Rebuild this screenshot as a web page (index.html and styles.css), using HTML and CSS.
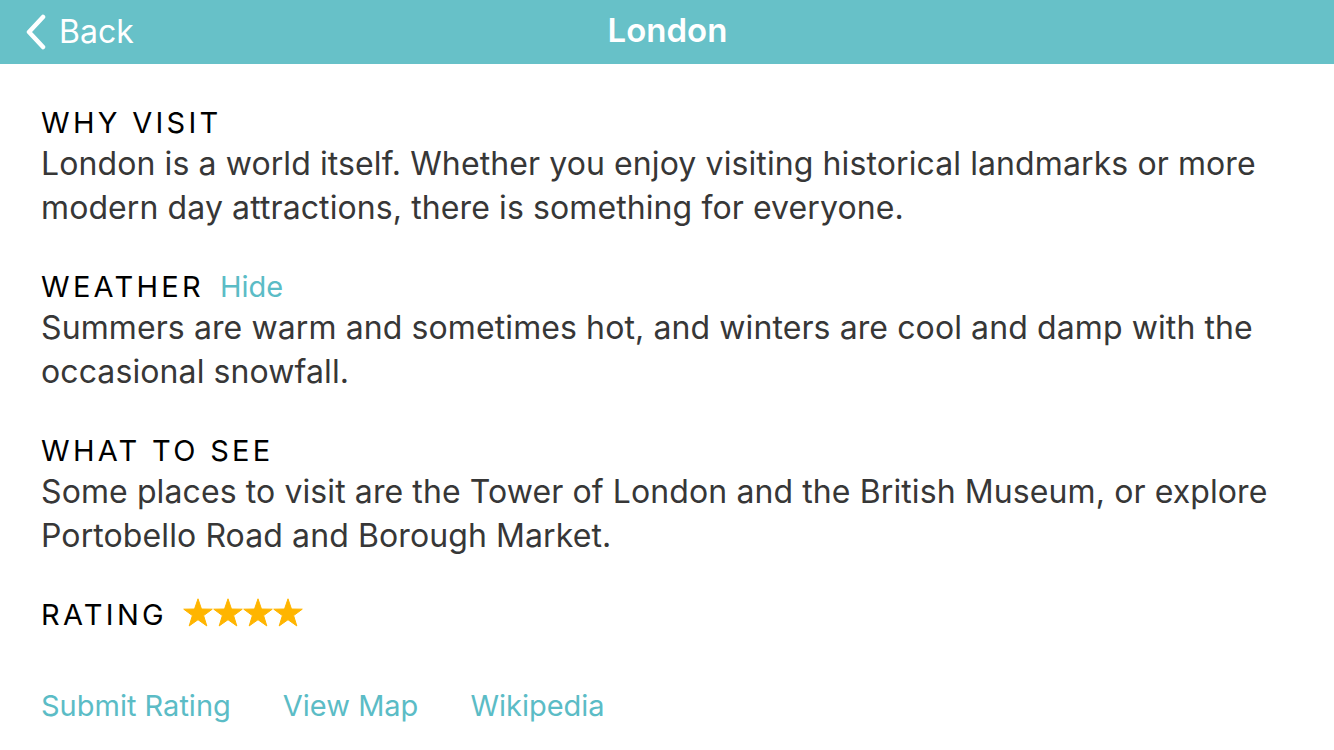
FILE: index.html
```html
<!DOCTYPE html>
<html lang="en">
<head>
<meta charset="utf-8">
<title>London</title>
<link rel="stylesheet" href="styles.css">
</head>
<body>
<header class="navbar">
  <a class="back" href="#">
    <svg class="chevron" width="22" height="36" viewBox="0 0 22 36"><path d="M18 3 L4 18 L18 33" fill="none" stroke="#fff" stroke-width="4.5" stroke-linecap="round" stroke-linejoin="round"/></svg>
    <span>Back</span>
  </a>
  <h1 class="title">London</h1>
  <span class="spacer"></span>
</header>
<main class="content">
  <section class="section">
    <h2 class="heading">WHY VISIT</h2>
    <p class="body">London is a world itself. Whether you enjoy visiting historical landmarks or more modern day attractions, there is something for everyone.</p>
  </section>
  <section class="section">
    <h2 class="heading">WEATHER <a class="hide" href="#">Hide</a></h2>
    <p class="body">Summers are warm and sometimes hot, and winters are cool and damp with the occasional snowfall.</p>
  </section>
  <section class="section">
    <h2 class="heading">WHAT TO SEE</h2>
    <p class="body">Some places to visit are the Tower of London and the British Museum, or explore Portobello Road and Borough Market.</p>
  </section>
  <section class="section rating">
    <h2 class="heading">RATING</h2>
    <div class="stars">
      <svg viewBox="0 0 30 29"><polygon points="15,0.8 18.47,11.03 29.27,11.16 20.61,17.62 23.82,27.94 15,21.7 6.18,27.94 9.39,17.62 0.73,11.16 11.53,11.03"/></svg>
      <svg viewBox="0 0 30 29"><polygon points="15,0.8 18.47,11.03 29.27,11.16 20.61,17.62 23.82,27.94 15,21.7 6.18,27.94 9.39,17.62 0.73,11.16 11.53,11.03"/></svg>
      <svg viewBox="0 0 30 29"><polygon points="15,0.8 18.47,11.03 29.27,11.16 20.61,17.62 23.82,27.94 15,21.7 6.18,27.94 9.39,17.62 0.73,11.16 11.53,11.03"/></svg>
      <svg viewBox="0 0 30 29"><polygon points="15,0.8 18.47,11.03 29.27,11.16 20.61,17.62 23.82,27.94 15,21.7 6.18,27.94 9.39,17.62 0.73,11.16 11.53,11.03"/></svg>
    </div>
  </section>
  <nav class="links">
    <a href="#">Submit Rating</a>
    <a href="#">View Map</a>
    <a href="#">Wikipedia</a>
  </nav>
</main>
</body>
</html>
```
FILE: styles.css
```css
html, body {
  margin: 0;
  padding: 0;
  background: #fff;
}
body {
  font-family: "Inter", "Roboto", "Noto Sans", sans-serif;
  width: 1334px;
  height: 750px;
  overflow: hidden;
}
a { text-decoration: none; }

.navbar {
  height: 64px;
  box-sizing: border-box;
  padding: 0 0 4px 25px;
  background: #67c1c8;
  display: grid;
  grid-template-columns: 1fr auto 1fr;
  align-items: center;
  color: #fff;
}
.back {
  display: flex;
  align-items: center;
  gap: 12px;
  color: #fff;
  font-size: 32px;
  line-height: 40px;
  justify-self: start;
  margin-top: 3px;
}
.chevron { display: block; margin-top: 1px; }
.title {
  margin: 0;
  font-size: 33px;
  font-weight: 600;
  line-height: 40px;
  transform: translateX(-12px);
}

.content {
  padding: 38px 41px 0;
}
.section {
  margin-bottom: 36px;
}
.heading {
  margin: 0;
  padding-top: 2px;
  font-size: 29px;
  font-weight: 400;
  letter-spacing: 3.3px;
  line-height: 38px;
  color: #000;
  display: flex;
  align-items: baseline;
  gap: 16px;
}
.hide {
  font-size: 29px;
  letter-spacing: 0;
  color: #5bbcc6;
}
.body {
  margin: 0;
  font-size: 32px;
  letter-spacing: 0.1px;
  line-height: 44px;
  color: #373737;
}
.rating {
  display: flex;
  align-items: center;
  gap: 16px;
  margin-bottom: 50px;
}
.stars {
  display: flex;
  margin-top: -4px;
}
.stars svg {
  width: 30px;
  height: 29px;
  fill: #ffb500;
  stroke: #ffb500;
  stroke-width: 1;
  stroke-linejoin: round;
  display: block;
}
.links {
  display: flex;
  gap: 52px;
  line-height: 44px;
}
.links a {
  font-size: 29px;
  letter-spacing: 0;
  color: #5bbcc6;
}
```
